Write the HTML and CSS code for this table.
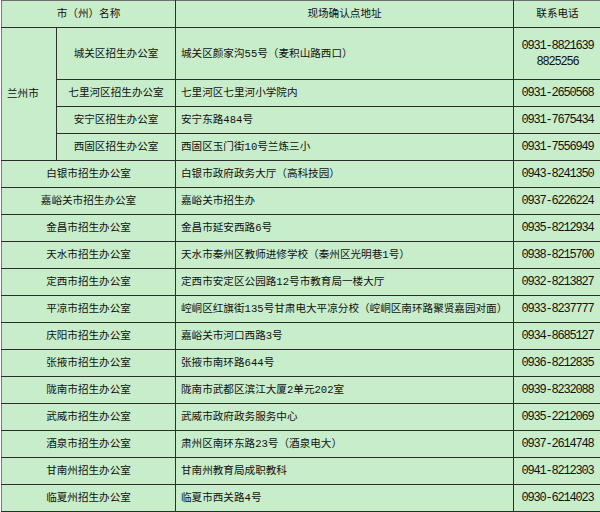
FILE: index.html
```html
<!DOCTYPE html>
<html lang="zh-CN">
<head>
<meta charset="utf-8">
<title>现场确认点</title>
<link rel="stylesheet" href="styles.css">
</head>
<body>
<table class="sheet">
  <colgroup>
    <col class="c-city"><col class="c-office"><col class="c-addr"><col class="c-tel">
  </colgroup>
  <tr class="head">
    <th colspan="2">市（州）名称</th>
    <th>现场确认点地址</th>
    <th>联系电话</th>
  </tr>
  <tr class="tall">
    <td rowspan="4" class="city">兰州市</td>
    <td class="office">城关区招生办公室</td>
    <td class="addr">城关区颜家沟55号（麦积山路西口）</td>
    <td class="tel">0931-8821639<br>8825256</td>
  </tr>
  <tr><td class="office">七里河区招生办公室</td><td class="addr">七里河区七里河小学院内</td><td class="tel">0931-2650568</td></tr>
  <tr><td class="office">安宁区招生办公室</td><td class="addr">安宁东路484号</td><td class="tel">0931-7675434</td></tr>
  <tr><td class="office">西固区招生办公室</td><td class="addr">西固区玉门街10号兰炼三小</td><td class="tel">0931-7556949</td></tr>
  <tr><td colspan="2" class="office">白银市招生办公室</td><td class="addr">白银市政府政务大厅（高科技园）</td><td class="tel">0943-8241350</td></tr>
  <tr><td colspan="2" class="office">嘉峪关市招生办公室</td><td class="addr">嘉峪关市招生办</td><td class="tel">0937-6226224</td></tr>
  <tr><td colspan="2" class="office">金昌市招生办公室</td><td class="addr">金昌市延安西路6号</td><td class="tel">0935-8212934</td></tr>
  <tr><td colspan="2" class="office">天水市招生办公室</td><td class="addr">天水市秦州区教师进修学校（秦州区光明巷1号）</td><td class="tel">0938-8215700</td></tr>
  <tr><td colspan="2" class="office">定西市招生办公室</td><td class="addr">定西市安定区公园路12号市教育局一楼大厅</td><td class="tel">0932-8213827</td></tr>
  <tr><td colspan="2" class="office">平凉市招生办公室</td><td class="addr">崆峒区红旗街135号甘肃电大平凉分校（崆峒区南环路聚贤嘉园对面）</td><td class="tel">0933-8237777</td></tr>
  <tr><td colspan="2" class="office">庆阳市招生办公室</td><td class="addr">嘉峪关市河口西路3号</td><td class="tel">0934-8685127</td></tr>
  <tr><td colspan="2" class="office">张掖市招生办公室</td><td class="addr">张掖市南环路644号</td><td class="tel">0936-8212835</td></tr>
  <tr><td colspan="2" class="office">陇南市招生办公室</td><td class="addr">陇南市武都区滨江大厦2单元202室</td><td class="tel">0939-8232088</td></tr>
  <tr><td colspan="2" class="office">武威市招生办公室</td><td class="addr">武威市政府政务服务中心</td><td class="tel">0935-2212069</td></tr>
  <tr><td colspan="2" class="office">酒泉市招生办公室</td><td class="addr">肃州区南环东路23号（酒泉电大）</td><td class="tel">0937-2614748</td></tr>
  <tr><td colspan="2" class="office">甘南州招生办公室</td><td class="addr">甘南州教育局成职教科</td><td class="tel">0941-8212303</td></tr>
  <tr><td colspan="2" class="office">临夏州招生办公室</td><td class="addr">临夏市西关路4号</td><td class="tel">0930-6214023</td></tr>
</table>
</body>
</html>
```
FILE: styles.css
```css
html, body {
  margin: 0;
  padding: 0;
  background: #ffffff;
  overflow: hidden;
}
body {
  width: 600px;
  height: 512px;
}
.sheet {
  margin-left: 1px;
  border-collapse: collapse;
  table-layout: fixed;
  width: 600px;
  background: #c8edca;
  color: #111111;
  font-family: "Liberation Mono", "Noto Sans CJK SC", sans-serif;
  font-size: 10.6px;
}
.c-city { width: 55px; }
.c-office { width: 119px; }
.c-addr { width: 338px; }
.c-tel { width: 88px; }
.sheet th, .sheet td {
  border: 1px solid #2e2e2e;
  padding: 0 4px;
  height: 26px;
  line-height: 16px;
  white-space: nowrap;
  overflow: hidden;
  font-weight: normal;
  text-align: center;
  vertical-align: middle;
}
.sheet tr.head th {
  border-top-color: #6f6f6f;
}
.sheet tr.tall td {
  height: 51px;
}
.sheet td.city {
  text-align: left;
  padding-left: 5px;
}
.sheet td.addr {
  text-align: left;
  padding-left: 5px;
  padding-right: 2px;
}
.sheet td.tel {
  font-size: 12px;
  letter-spacing: -1.2px;
}
.sheet th:first-child, .sheet td:first-child {
  border-left-color: #7a7a7a;
}
```
